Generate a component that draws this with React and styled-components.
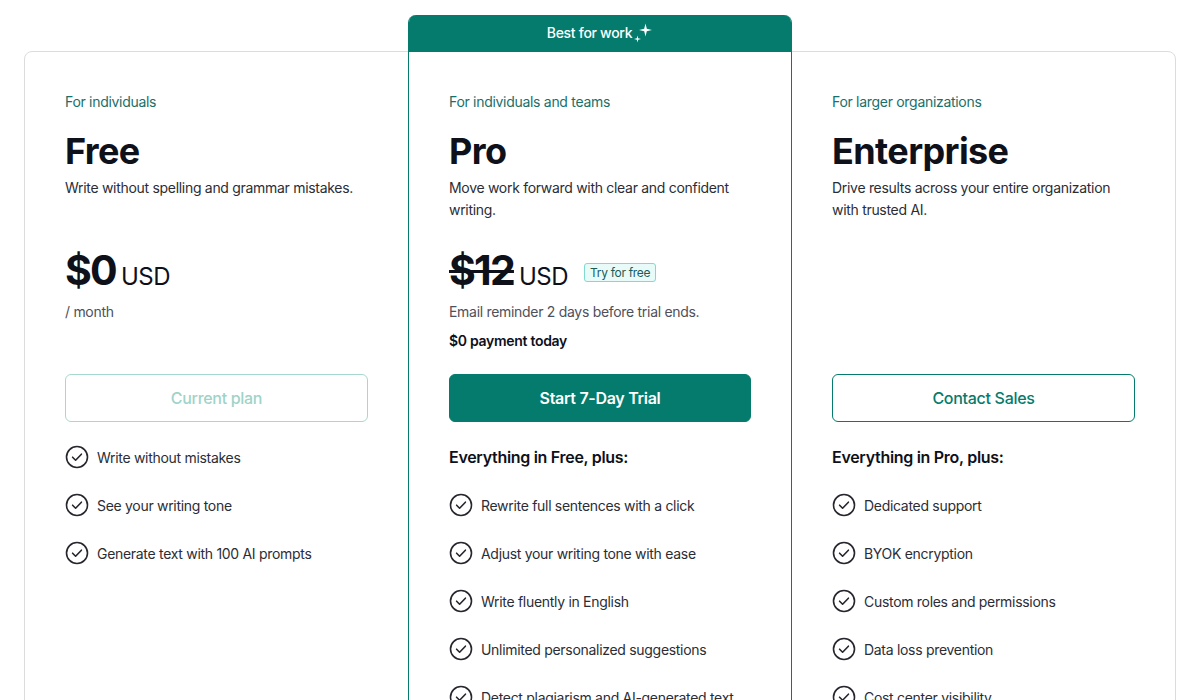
import React from 'react';
import styled, { createGlobalStyle } from 'styled-components';

const green = '#047b6c';
const teal_text = '#17706b';
const border_gray = '#dcdcdc';
const text_dark = '#0e101a';
const text_body = '#2b2d36';
const text_muted = '#4e505a';

const GlobalStyle = createGlobalStyle`
  html, body {
    margin: 0;
    padding: 0;
    background: #fff;
    font-family: Inter, 'Noto Sans', sans-serif;
    color: ${text_body};
    letter-spacing: -0.3px;
  }
`;

const Page = styled.div`
  padding: 51px 24px 0;
  height: 700px;
  box-sizing: border-box;
  overflow: hidden;
`;

const Plans = styled.div`
  display: grid;
  grid-template-columns: 1fr 384px 1fr;
  border: 1px solid ${border_gray};
  border-radius: 8px;
  height: 700px;
`;

const Column = styled.div`
  display: flex;
  flex-direction: column;
  padding: 40px 40px 0;
  box-sizing: border-box;
`;

const Featured = styled.div`
  margin: -37px 0 0;
  border: 1px solid ${green};
  border-top: none;
  border-radius: 8px 8px 0 0;
  display: flex;
  flex-direction: column;
`;

const Ribbon = styled.div`
  height: 37px;
  background: ${green};
  color: #fff;
  border-radius: 7px 7px 0 0;
  display: flex;
  align-items: center;
  justify-content: center;
  gap: 2px;
  font-size: 14px;
  font-weight: 500;
  padding-bottom: 2px;
  box-sizing: border-box;
`;

const Top = styled.div`
  min-height: 282px;
  display: flex;
  flex-direction: column;
`;

const Audience = styled.div`
  font-size: 14px;
  line-height: 20px;
  color: ${teal_text};
`;

const Title = styled.h2`
  margin: 19px 0 0;
  font-size: 36px;
  line-height: 40px;
  font-weight: 700;
  letter-spacing: -0.6px;
  color: ${text_dark};
`;

const Desc = styled.p`
  margin: 6px 0 0;
  font-size: 14px;
  line-height: 22px;
  min-height: 44px;
  color: ${text_body};
  padding-right: 10px;
`;

const PriceRow = styled.div`
  margin-top: 25px;
  display: flex;
  align-items: baseline;
  height: 48px;
  line-height: 48px;
  color: ${text_dark};
`;

const Amount = styled.span`
  font-size: 41px;
  font-weight: 700;
  letter-spacing: -1.8px;
  text-decoration: ${p => (p.$struck ? 'line-through' : 'none')};
  text-decoration-thickness: 3px;
`;

const Currency = styled.span`
  font-size: 24px;
  font-weight: 400;
  margin-left: 5px;
  letter-spacing: -0.5px;
`;

const Badge = styled.span`
  margin: 4px 0 0 16px;
  align-self: center;
  font-size: 12px;
  line-height: 17px;
  padding: 0 5px;
  border: 1px solid #7fdccd;
  background: #e8fbf8;
  border-radius: 3px;
  color: #1d5b59;
`;

const Note = styled.div`
  margin-top: ${p => p.$mt || '8px'};
  font-size: 14px;
  line-height: 20px;
  color: ${p => (p.$bold ? text_dark : text_muted)};
  font-weight: ${p => (p.$bold ? 600 : 400)};
`;

const Button = styled.button`
  height: 48px;
  width: 100%;
  border-radius: 6px;
  font-family: inherit;
  font-size: 16px;
  letter-spacing: -0.3px;
  cursor: pointer;
  border: 1px solid ${p => (p.$variant === 'muted' ? '#a7d8cf' : green)};
  background: ${p => (p.$variant === 'solid' ? green : '#fff')};
  color: ${p =>
    p.$variant === 'solid' ? '#fff' : p.$variant === 'muted' ? '#9fd3c8' : green};
  font-weight: ${p => (p.$variant === 'solid' ? 600 : 500)};
`;

const List = styled.ul`
  list-style: none;
  margin: 23px 0 0;
  padding: 0;
  display: flex;
  flex-direction: column;
  gap: 24px;
`;

const ListHead = styled.li`
  height: 24px;
  line-height: 24px;
  font-size: 16px;
  font-weight: 600;
  color: ${text_dark};
`;

const Item = styled.li`
  display: flex;
  align-items: center;
  gap: 8px;
  height: 24px;
  font-size: 14px;
  color: ${text_body};
`;

const Check = () => (
  <svg width="24" height="24" viewBox="0 0 24 24" fill="none">
    <circle cx="12" cy="12" r="10.5" stroke="#26272e" strokeWidth="1.6" />
    <path d="M7.6 12.2l3 3 5.8-6" stroke="#26272e" strokeWidth="1.6" strokeLinecap="round" strokeLinejoin="round" />
  </svg>
);

const Sparkle = () => (
  <svg width="19" height="20" viewBox="0 0 19 20" fill="#fff">
    <path d="M11.5 0.5 L12.8 5.7 L18 7 L12.8 8.3 L11.5 13.5 L10.2 8.3 L5 7 L10.2 5.7 Z" />
    <path d="M3.5 12.5 L4.2 15.3 L7 16 L4.2 16.7 L3.5 19.5 L2.8 16.7 L0 16 L2.8 15.3 Z" />
  </svg>
);

const Features = ({ heading, items }) => (
  <List>
    {heading && <ListHead>{heading}</ListHead>}
    {items.map(t => (
      <Item key={t}>
        <Check />
        {t}
      </Item>
    ))}
  </List>
);

export default function App() {
  return (
    <>
      <GlobalStyle />
      <Page>
        <Plans>
          <Column>
            <Top>
              <Audience>For individuals</Audience>
              <Title>Free</Title>
              <Desc>Write without spelling and grammar mistakes.</Desc>
              <PriceRow>
                <Amount>$0</Amount>
                <Currency>USD</Currency>
              </PriceRow>
              <Note>/ month</Note>
            </Top>
            <Button $variant="muted">Current plan</Button>
            <Features
              items={[
                'Write without mistakes',
                'See your writing tone',
                'Generate text with 100 AI prompts',
              ]}
            />
          </Column>

          <Featured>
            <Ribbon>
              Best for work
              <Sparkle />
            </Ribbon>
            <Column>
              <Top>
                <Audience>For individuals and teams</Audience>
                <Title>Pro</Title>
                <Desc>Move work forward with clear and confident writing.</Desc>
                <PriceRow>
                  <Amount $struck>$12</Amount>
                  <Currency>USD</Currency>
                  <Badge>Try for free</Badge>
                </PriceRow>
                <Note>Email reminder 2 days before trial ends.</Note>
                <Note $bold $mt="9px">$0 payment today</Note>
              </Top>
              <Button $variant="solid">Start 7-Day Trial</Button>
              <Features
                heading="Everything in Free, plus:"
                items={[
                  'Rewrite full sentences with a click',
                  'Adjust your writing tone with ease',
                  'Write fluently in English',
                  'Unlimited personalized suggestions',
                  'Detect plagiarism and AI-generated text',
                ]}
              />
            </Column>
          </Featured>

          <Column>
            <Top>
              <Audience>For larger organizations</Audience>
              <Title>Enterprise</Title>
              <Desc>Drive results across your entire organization with trusted AI.</Desc>
            </Top>
            <Button>Contact Sales</Button>
            <Features
              heading="Everything in Pro, plus:"
              items={[
                'Dedicated support',
                'BYOK encryption',
                'Custom roles and permissions',
                'Data loss prevention',
                'Cost center visibility',
              ]}
            />
          </Column>
        </Plans>
      </Page>
    </>
  );
}
